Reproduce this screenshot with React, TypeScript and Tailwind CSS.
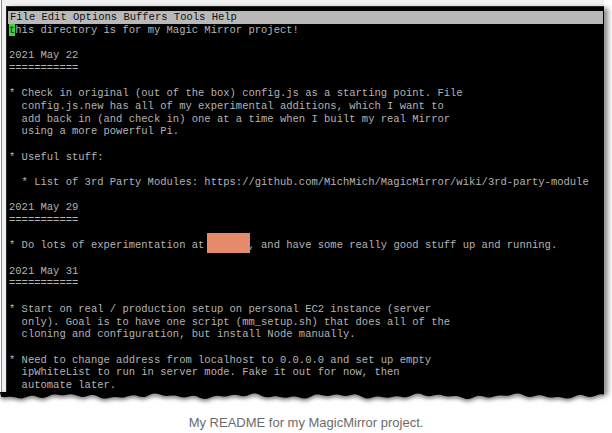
const lines: string[] = [
  "",
  "2021 May 22",
  "===========",
  "",
  "* Check in original (out of the box) config.js as a starting point. File",
  "  config.js.new has all of my experimental additions, which I want to",
  "  add back in (and check in) one at a time when I built my real Mirror",
  "  using a more powerful Pi.",
  "",
  "* Useful stuff:",
  "",
  "  * List of 3rd Party Modules: https://github.com/MichMich/MagicMirror/wiki/3rd-party-module",
  "",
  "2021 May 29",
  "===========",
  "",
];

const tail: string[] = [
  "",
  "2021 May 31",
  "===========",
  "",
  "* Start on real / production setup on personal EC2 instance (server",
  "  only). Goal is to have one script (mm_setup.sh) that does all of the",
  "  cloning and configuration, but install Node manually.",
  "",
  "* Need to change address from localhost to 0.0.0.0 and set up empty",
  "  ipWhiteList to run in server mode. Fake it out for now, then",
  "  automate later.",
];

// ragged bottom edge of the cropped screenshot
function tornPath() {
  let d = "M0 0 H604 V4";
  for (let x = 604; x >= 0; x -= 3) {
    const y =
      4.2 +
      1.3 * Math.sin(x * 0.07) +
      1.0 * Math.sin(x * 0.31 + 1) +
      0.7 * Math.sin(x * 1.9 + 2);
    d += ` L${x} ${y.toFixed(1)}`;
  }
  return d + " Z";
}

function Line({ text }: { text: string }) {
  return <div className="h-[12.7px] whitespace-pre">{text || " "}</div>;
}

export default function App() {
  return (
    <div className="w-[612px] h-[433px] bg-white overflow-hidden">
      <div className="ml-[1px] w-[603px] border-l border-[#8c8c8c] bg-[#f1f1f1] pl-[4px] pt-[6px]">
        <div className="bg-black border-t border-l border-[#2a2a2a] pt-[4px] pb-[1px] shadow-[4px_2px_5px_rgba(0,0,0,0.45)] font-['Liberation_Mono',monospace] text-[10.5px] leading-[12.7px] text-[#b3b3b3]">
          {/* emacs menu bar */}
          <div className="mx-[1px] h-[12.7px] bg-[#b9b9b9] pl-[2px] text-[#111] whitespace-pre">
            File Edit Options Buffers Tools Help
          </div>
          <div className="pl-[2px]">
            <div className="h-[12.7px] whitespace-pre">
              <span className="bg-[#3bd43b] text-[#0b3a0b]">t</span>
              his directory is for my Magic Mirror project!
            </div>
            {lines.map((l, i) => (
              <Line key={i} text={l} />
            ))}
            <div className="h-[12.7px] whitespace-pre">
              {"* Do lots of experimentation at "}
              <span className="relative">
                {"      "}
                <span className="absolute left-[-4px] right-[-2px] top-[-6px] bottom-[-2px] bg-[#e58b6b]" />
              </span>
              {", and have some really good stuff up and running."}
            </div>
            {tail.map((l, i) => (
              <Line key={i} text={l} />
            ))}
          </div>
        </div>
      </div>
      <svg
        width="604"
        height="8"
        viewBox="0 0 604 8"
        className="block -mt-[1px] drop-shadow-[0_2px_2px_rgba(0,0,0,0.55)]"
      >
        <path d={tornPath()} fill="#000" />
      </svg>
      <p className="mt-[14px] text-center font-['Liberation_Sans',Arial,sans-serif] text-[13px] leading-[18px] text-[#6b6b6b]">
        My README for my MagicMirror project.
      </p>
    </div>
  );
}
